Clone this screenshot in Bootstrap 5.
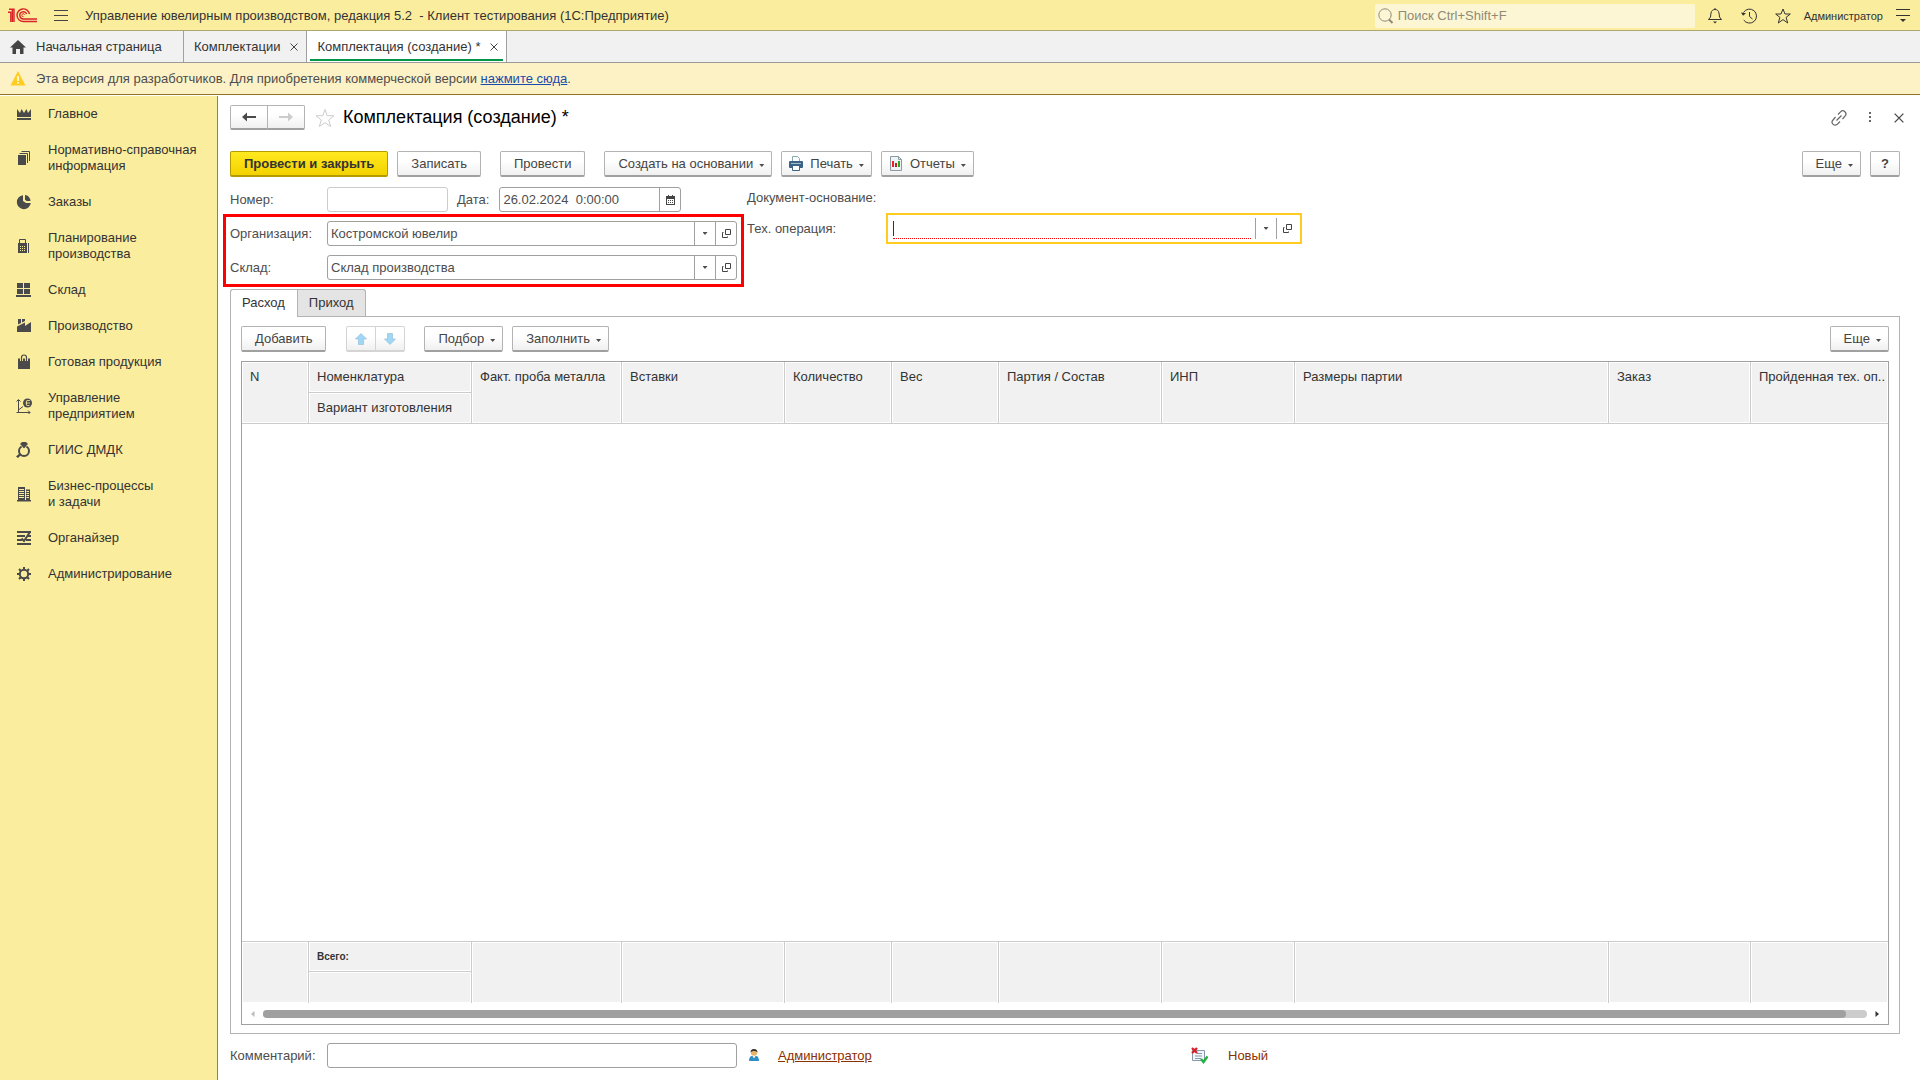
<!DOCTYPE html>
<html lang="ru">
<head>
<meta charset="utf-8">
<meta name="viewport" content="width=device-width, initial-scale=1">
<title>Комплектация (создание)</title>
<link rel="stylesheet" href="https://cdn.jsdelivr.net/npm/bootstrap@5.3.0/dist/css/bootstrap.min.css">
<style>
  body { font-family: "Liberation Sans", Arial, sans-serif; font-size: 13px; line-height: 16px; color: #4d4d4d; background: #fff; }
  svg { display: block; flex: none; }
  .shell { min-height: 100vh; height: 100vh; }
  .fill-y { min-height: 0; }
  .ghost { background: none; border: 0; padding: 0; color: #444; display: flex; align-items: center; justify-content: center; }

  /* title bar */
  .topbar { height: 31px; background: #fbed9e; border-bottom: 1px solid #aea66f; color: #333; padding: 1px 10px 0 8px; gap: 17px; }
  .app-name { white-space: pre; }
  .top-tools { gap: 18px; }
  .search { width: 320px; height: 24px; background: #fdf6d5; border-radius: 2px; padding: 0 3px; margin-right: -6px; }
  .search input { border: 0; background: none; outline: 0; width: 100%; padding: 0; }
  .search input::placeholder { color: #8f8b76; opacity: 1; }
  .user-name { font-size: 11px; color: #333; text-decoration: none; margin: 0 -5px; }

  /* open windows */
  .win-tabs { height: 32px; background: #f1f1f1; border-bottom: 1px solid #9a9a9a; }
  .win-tab { border-right: 1px solid #a0a0a0; padding: 0 8px 0 10px; gap: 10px; }
  .win-tab a { color: #333; text-decoration: none; white-space: nowrap; }
  .win-tab.current { background: #fff; box-shadow: inset 3px 0 #fff, inset -3px 0 #fff, inset 0 -1px #fff, inset 0 -3px #009646; }
  .win-home { width: 184px; padding: 0 0 0 10px; }

  .notice { height: 32px; background: #fdf2c6; border-bottom: 1px solid #8e7526; padding-left: 10px; gap: 10px; }
  .notice a { color: #1a4bac; }

  /* sections */
  .sections { width: 218px; background: #fbed9e; border-right: 1px solid #8d8550; margin-top: 1px; flex: none; }
  .sections a { display: flex; align-items: center; gap: 15px; padding: 10px 0 10px 15px; color: #333; text-decoration: none; }
  .sections svg { fill: #4a4a4a; }

  /* form */
  .doc { padding: 10px 20px 12px 12px; min-width: 0; }
  .doc h1 { font-size: 18px; line-height: 22px; color: #000; margin: 0; font-weight: 400; padding-bottom: 2px; }
  .doc-star { margin: 0 6px 0 8px; }
  .doc-tools { gap: 22px; margin-right: -4px; }
  .commands { margin-top: 21px; gap: 9px; }
  .commands .apart { margin-left: 10px; }
  .tb { height: 26px; padding: 0 13px; border: 1px solid #b3b3b3; border-bottom: 2px solid #a0a0a0; border-radius: 2px; background: linear-gradient(#fff 40%, #f0f0f0); color: #444; display: inline-flex; align-items: center; justify-content: center; white-space: nowrap; }
  .tb.with-caret { padding-right: 7px; gap: 6px; }
  .tb.with-icon { padding-left: 6px; }
  .tb-main { background: linear-gradient(#ffe91f, #f4d200); border-color: #b39b00; color: #333; font-weight: 700; }
  .tb-help { font-weight: 700; padding: 0 10px; }
  .tb.faint { border-color: #d4d4d4; padding: 0; width: 30px; }
  .pair-l { border-radius: 2px 0 0 2px; }
  .pair-r { border-radius: 0 2px 2px 0; margin-left: -1px; }
  .tb.step { width: 38px; height: 25px; padding: 0; }
  .caret-down { width: 5px; height: 3px; background: #4d4d4d; clip-path: polygon(0 0, 100% 0, 50% 100%); flex: none; }
  .tb .caret-down { margin-top: 4px; }
  .lbl { width: 97px; flex: none; }
  .lbl-date { margin: 0 10px 0 9px; }
  .lbl-op { width: 139px; }
  .field { display: flex; height: 25px; border: 1px solid #a0a0a0; border-radius: 3px; background: #fff; overflow: hidden; }
  .field input { flex: 1; min-width: 0; border: 0; outline: 0; padding: 0 3px; color: #4d4d4d; background: none; }
  .field .ghost { width: 21px; border-left: 1px solid #a0a0a0; flex: none; }
  .field.pale { border-color: #ccc; width: 121px; }
  .field.when { width: 182px; }
  .field.wide { width: 410px; }
  .field.active { width: 416px; height: 31px; border: 2px solid #ffcc1f; border-radius: 0; padding: 3px; position: relative; }
  .field.active input { border-bottom: 1px dotted #f00; margin: 0 4px 0 2px; height: 21px; }
  .text-cursor { position: absolute; left: 5px; top: 6px; width: 1px; height: 15px; background: #333; }
  .marked { border: 3px solid #f00; margin: 2px 0 2px -7px; padding: 4px; gap: 9px; }
  .form-body { margin-top: 10px; }
  .form-left { width: 514px; flex: none; }
  .form-right { padding: 3px 0 0 3px; gap: 7px; }

  /* pages */
  .page-tab { height: 27px; border: 1px solid #b3b3b3; border-bottom: 0; background: #e4e4e4; color: #333; padding: 0 11px; border-radius: 0 3px 0 0; }
  .page-tab.on { background: #fff; border-radius: 3px 0 0 0; border-right: 0; margin-bottom: -1px; height: 28px; position: relative; z-index: 1; padding: 0 12px 1px 11px; }
  .page { border: 1px solid #b3b3b3; padding: 9px 10px 8px; }
  .rows-tools { gap: 9px; }
  .rows-tools .arrows { margin: 0 10px 0 11px; }
  .sheet { border: 1px solid #a0a0a0; margin-top: 9px; overflow: hidden; }
  .sheet-scroll { overflow: hidden; }
  .grid-table { table-layout: fixed; width: 100%; min-width: 1646px; height: 100%; border-collapse: separate; border-spacing: 0; color: #333; }
  .grid-table th, .grid-table tfoot td { height: 31px; font-weight: 400; vertical-align: top; padding: 7px 8px 0; background: #f1f1f1; border-right: 1px solid #ccc; border-bottom: 1px solid #ccc; box-shadow: inset 0 0 0 1px #fff; white-space: nowrap; }
  .grid-table tr > .last { border-right: 0; padding-right: 0; }
  .grid-table tfoot tr:first-child td { border-top: 1px solid #ccc; font-size: 10px; font-weight: 700; }
  .grid-table tfoot td.low { border-bottom: 0; }
  .c-n { width: 67px; } .c-md { width: 163px; } .c-probe { width: 150px; } .c-num { width: 107px; }
  .c-inp { width: 133px; } .c-size { width: 314px; } .c-order { width: 142px; }
  .hbar { height: 21px; padding: 0 8px; gap: 8px; }
  .hbar-track { height: 8px; border-radius: 4px; background: #ccc; }
  .hbar-thumb { height: 8px; border-radius: 4px; background: #a0a0a0; }

  .foot { margin-top: 9px; }
  .foot .who { width: 443px; gap: 18px; margin-left: 11px; }
  .foot .state { gap: 20px; }
  .brown { color: #8b3000; }
</style>
<script src="https://cdn.jsdelivr.net/npm/bootstrap@5.3.0/dist/js/bootstrap.bundle.min.js"></script>
</head>
<body>
<svg width="0" height="0" class="position-absolute" aria-hidden="true">
  <symbol id="i-open" viewBox="0 0 9 9"><path d="M3.500.5h5v5h-5zM1.500 3.500H.5v5h5v-1" fill="none" stroke="#444"/></symbol>
  <symbol id="i-x" viewBox="0 0 8 8"><path d="M.5.5l7 7M7.500.5l-7 7" fill="none" stroke="#444"/></symbol>
</svg>
<div class="shell d-flex flex-column">

  <header class="topbar d-flex align-items-center">
    <svg width="29" height="15" viewBox="0 0 29 15" fill="none" stroke="#d8232a" stroke-width="1.400"><path d="M0 4.200h2.800V14M1 1.200h5V14M4.400 1.200V14"/><path d="M21.500 6A6.300 6.300 0 1 0 15.500 13.500H29"/><path d="M18.700 6a3.600 3.600 0 1 0-3.200 5H29"/><path d="M16.700 6.600a1.500 1.500 0 1 0-1.200 2.100" stroke-width="1"/></svg>
    <button class="ghost" aria-label="Меню"><svg width="14" height="12" viewBox="0 0 14 12" stroke="#444"><path d="M0 .5h14M0 5.500h14M0 10.500h14"/></svg></button>
    <span class="app-name">Управление ювелирным производством, редакция 5.2  - Клиент тестирования (1С:Предприятие)</span>
    <div class="top-tools d-flex align-items-center ms-auto">
      <label class="search d-flex align-items-center">
        <svg width="16" height="16" viewBox="0 0 16 16" fill="none" stroke="#8f8b76"><circle cx="7" cy="7" r="6.200"/><path d="M11 11.500l3.500 3.500" stroke-width="2"/></svg>
        <input type="search" class="ms-1" placeholder="Поиск Ctrl+Shift+F" aria-label="Поиск">
      </label>
      <button class="ghost" aria-label="Уведомления"><svg width="16" height="17" viewBox="0 0 16 17" fill="none" stroke="#333"><path d="M8 1v1.500M1.500 12.500h13L12.500 10 12 6C11.500 3.500 10 2.500 8 2.500S4.500 3.500 4 6l-.5 4z"/><path d="M6 14.500h4L8 16.500z" fill="#333" stroke="none"/></svg></button>
      <button class="ghost" aria-label="История"><svg width="16" height="16" viewBox="0 0 16 16" fill="none" stroke="#333"><path d="M2.500 4.500A7 7 0 1 1 2.700 12M8.500 4v4.500l3 2.500"/><path d="M0 4.500l5 .8-3 2.500z" fill="#333" stroke="none"/></svg></button>
      <button class="ghost" aria-label="Избранное"><svg width="16" height="16" viewBox="0 0 16 16" fill="none" stroke="#333"><path d="M8 1l2 5h5.300l-4.200 3.400L12.700 15 8 11.600 3.300 15l1.600-5.600L.7 6H6z"/></svg></button>
      <a href="#" class="user-name">Администратор</a>
      <button class="ghost" aria-label="Сервис"><svg width="14" height="13" viewBox="0 0 14 13"><path d="M0 .5h14M0 6.500h14" stroke="#333"/><path d="M4 10h6l-3 3z" fill="#333"/></svg></button>
    </div>
  </header>

  <nav class="win-tabs d-flex">
    <div class="win-tab win-home d-flex align-items-center"><svg width="16" height="14" viewBox="0 0 16 14" fill="#444"><path d="M8 0L0 7.500h2.500V14H6V9h4v5h3.500V7.500H16z"/></svg><a href="#">Начальная страница</a></div>
    <div class="win-tab d-flex align-items-center"><a href="#">Комплектации</a><button class="ghost" aria-label="Закрыть"><svg width="8" height="8"><use href="#i-x"/></svg></button></div>
    <div class="win-tab current d-flex align-items-center"><a href="#">Комплектация (создание) *</a><button class="ghost" aria-label="Закрыть"><svg width="8" height="8"><use href="#i-x"/></svg></button></div>
  </nav>

  <div class="notice d-flex align-items-center">
    <svg width="16" height="15" viewBox="0 0 16 15"><path d="M8 0l7.500 14.500H.5z" fill="#fc2"/><path d="M7.200 5h1.600v5H7.200zM7.200 11h1.600v1.600H7.200z" fill="#fff"/></svg>
    <span>Эта версия для разработчиков. Для приобретения коммерческой версии <a href="#">нажмите сюда</a>.</span>
  </div>

  <div class="fill-y d-flex flex-grow-1">
    <nav class="sections">
      <a href="#"><svg width="18" height="16" viewBox="0 0 18 16"><path d="M2 3l3 4 1.500-4L9 7l2.500-4L13 7l3-4v8H2zM2 12h14v2H2z"/></svg>Главное</a>
      <a href="#"><svg width="18" height="16" viewBox="0 0 18 16"><path d="M3 5h8v10H3z"/><path d="M4.500 3.500h8V13M6.500 1.500h8V11" fill="none" stroke="#4a4a4a"/></svg><span>Нормативно-справочная<br>информация</span></a>
      <a href="#"><svg width="18" height="16" viewBox="0 0 18 16"><path d="M8 1.200A7 7 0 1 0 15.800 9H11L8 7z"/><path d="M10 1a6 6 0 0 1 5.500 6H11.500L10 5.500z"/></svg>Заказы</a>
      <a href="#"><svg width="18" height="16" viewBox="0 0 18 16"><path d="M4.500 5V1.500h6V5" fill="none" stroke="#4a4a4a"/><path d="M3 5h9v10H3z"/><path d="M5 8.500h6M5 10.500h6M5 12.500h6" stroke="#fbed9e" stroke-dasharray="1 1"/><path d="M13.500 5v10" stroke="#4a4a4a"/></svg><span>Планирование<br>производства</span></a>
      <a href="#"><svg width="18" height="16" viewBox="0 0 18 16"><path d="M2 1h6v5H2zM9 1h6v5H9zM2 7h6v5H2zM9 7h6v5H9zM1 13h15v2H1z"/></svg>Склад</a>
      <a href="#"><svg width="18" height="16" viewBox="0 0 18 16"><path d="M3 1h3v4L3 6.500zM7 1h3v2L7 4.500zM2 14V8.500l8-4V8l6-4v10z"/></svg>Производство</a>
      <a href="#"><svg width="18" height="16" viewBox="0 0 18 16"><path d="M3 4.500h12V15H3z"/><path d="M6.500 7V3.500a2.500 2.500 0 0 1 5 0V7" fill="none" stroke="#fbed9e" stroke-width="3"/><path d="M6.500 7V3.500a2.500 2.500 0 0 1 5 0V7" fill="none" stroke="#4a4a4a" stroke-width="1.200"/></svg>Готовая продукция</a>
      <a href="#"><svg width="18" height="16" viewBox="0 0 18 16"><path d="M3.500 2v12.500M1.500 14.500H15M3.500 12L8 8.500M1.500 3.500l2-2 2 2M13 12.500l2 2-2 2" fill="none" stroke="#4a4a4a"/><circle cx="12.500" cy="5" r="4.500"/><path d="M12 2.500h3M10.500 5H15M12 7.500h2.500M11.500 2.500v5" stroke="#fbed9e" stroke-width=".8"/></svg><span>Управление<br>предприятием</span></a>
      <a href="#"><svg width="18" height="16" viewBox="0 0 18 16"><circle cx="9" cy="9" r="5" fill="none" stroke="#4a4a4a" stroke-width="2"/><path d="M6 3h6l-3 4z" stroke="#fbed9e"/><path d="M7 0h4l2 2-4 4-4-4zM1 14.500l4-3.500 1.500 1.500L3 16z"/></svg>ГИИС ДМДК</a>
      <a href="#"><svg width="18" height="16" viewBox="0 0 18 16"><path d="M2 14h14v1.500H2zM3 1h7v14H3zM11 3.500h4V15h-4z"/><path d="M4 3.500h5M4 5.500h5M4 7.500h5M4 9.500h5M4 11.500h5M11.500 5.500h2.500M11.500 7.500h2.500M11.500 9.500h2.500M11.500 11.500h2.500" stroke="#fbed9e"/></svg><span>Бизнес-процессы<br>и задачи</span></a>
      <a href="#"><svg width="18" height="16" viewBox="0 0 18 16"><path d="M2 1h14v2H2zM2 5h8v2H2zM13 5h3v2h-3zM2 9h5v2H2zM11 9h5v2h-5zM2 13h14v2H2z"/><path d="M15 2l-6 9-2.500-2.500" fill="none" stroke="#4a4a4a" stroke-width="2"/></svg>Органайзер</a>
      <a href="#"><svg width="18" height="16" viewBox="0 0 18 16"><circle cx="9" cy="8" r="4.200" fill="none" stroke="#4a4a4a" stroke-width="2"/><path d="M9 1v3M9 12v3M2 8h3M13 8h3M4 3l2 2M12 11l2 2M4 13l2-2M12 5l2-2" stroke="#4a4a4a" stroke-width="2"/></svg>Администрирование</a>
    </nav>

    <main class="doc d-flex flex-column flex-grow-1">
      <div class="d-flex align-items-center">
        <button class="tb step pair-l" aria-label="Назад"><svg width="14" height="10" viewBox="0 0 14 10"><path d="M0 5l5-4.500V4h9v2H5v3.500z" fill="#4a4a4a"/></svg></button>
        <button class="tb step pair-r" aria-label="Вперед"><svg width="14" height="10" viewBox="0 0 14 10"><path d="M14 5L9 .5V4H0v2h9v3.500z" fill="#ccc"/></svg></button>
        <svg class="doc-star" width="24" height="20" viewBox="0 0 24 20" fill="none" stroke="#ccc"><path d="M12 1.500l2.200 6.200h6.800l-5.300 4.300 2 6.500L12 14.700l-5.700 3.800 2-6.500L3 7.700h6.800z"/></svg>
        <h1>Комплектация (создание) *</h1>
        <div class="doc-tools ms-auto d-flex align-items-center">
          <button class="ghost" aria-label="Ссылка"><svg width="16" height="16" viewBox="0 0 16 16" fill="none" stroke="#666" stroke-width="1.200"><path d="M7 4.500l2.500-2.700a3 3 0 0 1 4.500 4.300L11.500 9M9 11.500l-2.500 2.700A3 3 0 0 1 2 10l2.500-3M5.500 10.500l5-5"/></svg></button>
          <button class="ghost" aria-label="Ещё"><svg width="3" height="11" fill="#666"><path d="M0 0h2v2H0zM0 4h2v2H0zM0 8h2v2H0z"/></svg></button>
          <button class="ghost" aria-label="Закрыть"><svg width="10" height="10" viewBox="0 0 8 8"><use href="#i-x"/></svg></button>
        </div>
      </div>

      <div class="commands d-flex">
        <button class="tb tb-main">Провести и закрыть</button>
        <button class="tb">Записать</button>
        <button class="tb apart">Провести</button>
        <button class="tb with-caret apart">Создать на основании <i class="caret-down"></i></button>
        <button class="tb with-caret with-icon"><svg width="16" height="15" viewBox="0 0 16 15"><path d="M4.500 6V.5h5l2 2V6" fill="#fff" stroke="#8aa"/><rect x="1" y="5" width="14" height="7" rx="1" fill="#3c6384"/><path d="M4.500 9.500h7v5h-7z" fill="#fff" stroke="#3c6384"/><path d="M3 7.500h10" stroke="#9fc0d8"/></svg>Печать <i class="caret-down"></i></button>
        <button class="tb with-caret with-icon"><svg width="16" height="15" viewBox="0 0 16 15"><path d="M2.500.5h8l3 3v11h-11z" fill="#eef3f6" stroke="#8a9aa5"/><path d="M10.500.5v3h3" fill="none" stroke="#8a9aa5"/><path d="M4 5h2v6H4z" fill="#e22"/><path d="M7 7h2v4H7z" fill="#b22"/><path d="M10 5h2v6h-2z" fill="#2a2"/></svg>Отчеты <i class="caret-down"></i></button>
        <button class="tb with-caret ms-auto">Еще <i class="caret-down"></i></button>
        <button class="tb tb-help">?</button>
      </div>

      <div class="form-body d-flex">
        <div class="form-left">
          <div class="d-flex align-items-center">
            <label class="lbl" for="num">Номер:</label>
            <div class="field pale"><input id="num" type="text"></div>
            <label class="lbl-date" for="date">Дата:</label>
            <div class="field when"><input id="date" type="text" value="26.02.2024  0:00:00"><button class="ghost" aria-label="Календарь"><svg width="9" height="10" viewBox="0 0 9 10"><path d="M0 1h9v9H0z" fill="#444"/><path d="M1 4h7v5H1z" fill="#fff"/><path d="M2 5.500h5M2 7.500h5" stroke="#444" stroke-dasharray="1 1"/><path d="M2 0h1v2H2zM6 0h1v2H6z" fill="#444"/></svg></button></div>
          </div>
          <div class="marked d-flex flex-column">
            <div class="d-flex align-items-center">
              <label class="lbl" for="org">Организация:</label>
              <div class="field wide"><input id="org" type="text" value="Костромской ювелир"><button class="ghost" aria-label="Выбрать"><i class="caret-down"></i></button><button class="ghost" aria-label="Открыть"><svg width="9" height="9"><use href="#i-open"/></svg></button></div>
            </div>
            <div class="d-flex align-items-center">
              <label class="lbl" for="store">Склад:</label>
              <div class="field wide"><input id="store" type="text" value="Склад производства"><button class="ghost" aria-label="Выбрать"><i class="caret-down"></i></button><button class="ghost" aria-label="Открыть"><svg width="9" height="9"><use href="#i-open"/></svg></button></div>
            </div>
          </div>
        </div>
        <div class="form-right d-flex flex-column">
          <div>Документ-основание:</div>
          <div class="d-flex align-items-center">
            <label class="lbl-op" for="op">Тех. операция:</label>
            <div class="field active"><input id="op" type="text"><span class="text-cursor"></span><button class="ghost" aria-label="Выбрать"><i class="caret-down"></i></button><button class="ghost" aria-label="Открыть"><svg width="9" height="9"><use href="#i-open"/></svg></button></div>
          </div>
        </div>
      </div>

      <div class="d-flex align-items-end">
        <button class="page-tab on">Расход</button>
        <button class="page-tab">Приход</button>
      </div>
      <section class="page fill-y d-flex flex-column flex-grow-1">
        <div class="rows-tools d-flex">
          <button class="tb">Добавить</button>
          <div class="arrows d-flex">
            <button class="tb faint pair-l" aria-label="Вверх"><svg width="12" height="12" viewBox="0 0 12 12"><path d="M6 .5l5.500 5.500H8.500v5.500h-5V6H.5z" fill="#9fd8f7" stroke="#8fb8d0" stroke-width=".6"/></svg></button>
            <button class="tb faint pair-r" aria-label="Вниз"><svg width="12" height="12" viewBox="0 0 12 12"><path d="M6 11.500l5.500-5.500H8.500V.5h-5V6H.5z" fill="#9fd8f7" stroke="#8fb8d0" stroke-width=".6"/></svg></button>
          </div>
          <button class="tb with-caret">Подбор <i class="caret-down"></i></button>
          <button class="tb with-caret">Заполнить <i class="caret-down"></i></button>
          <button class="tb with-caret ms-auto">Еще <i class="caret-down"></i></button>
        </div>
        <div class="sheet fill-y d-flex flex-column flex-grow-1">
          <div class="sheet-scroll fill-y flex-grow-1">
            <table class="grid-table">
              <colgroup><col class="c-n"><col class="c-md"><col class="c-probe"><col class="c-md"><col class="c-num"><col class="c-num"><col class="c-md"><col class="c-inp"><col class="c-size"><col class="c-order"><col></colgroup>
              <thead>
                <tr><th rowspan="2">N</th><th>Номенклатура</th><th rowspan="2">Факт. проба металла</th><th rowspan="2">Вставки</th><th rowspan="2">Количество</th><th rowspan="2">Вес</th><th rowspan="2">Партия / Состав</th><th rowspan="2">ИНП</th><th rowspan="2">Размеры партии</th><th rowspan="2">Заказ</th><th rowspan="2" class="last">Пройденная тех. оп..</th></tr>
                <tr><th>Вариант изготовления</th></tr>
              </thead>
              <tbody><tr><td colspan="11"></td></tr></tbody>
              <tfoot>
                <tr><td rowspan="2" class="low"></td><td>Всего:</td><td rowspan="2" class="low"></td><td rowspan="2" class="low"></td><td rowspan="2" class="low"></td><td rowspan="2" class="low"></td><td rowspan="2" class="low"></td><td rowspan="2" class="low"></td><td rowspan="2" class="low"></td><td rowspan="2" class="low"></td><td rowspan="2" class="low last"></td></tr>
                <tr><td class="low"></td></tr>
              </tfoot>
            </table>
          </div>
          <div class="hbar d-flex align-items-center">
            <svg width="5" height="8" viewBox="0 0 5 8"><path d="M4.500 1v6L1 4z" fill="#bbb"/></svg>
            <div class="hbar-track flex-grow-1"><div class="hbar-thumb" style="width:98.7%"></div></div>
            <svg width="5" height="8" viewBox="0 0 5 8"><path d="M.5 1v6L4 4z" fill="#333"/></svg>
          </div>
        </div>
      </section>

      <div class="foot d-flex align-items-center">
        <label class="lbl" for="note">Комментарий:</label>
        <div class="field wide"><input id="note" type="text"></div>
        <div class="who d-flex align-items-center">
          <svg width="12" height="16" viewBox="0 0 12 16"><circle cx="6" cy="4.500" r="3.200" fill="#e8b36a"/><path d="M2.500 4.500a3.500 3.500 0 0 1 7 0C8 2.500 4 2.500 2.500 4.500z" fill="#333"/><path d="M1 13c0-3 1-5 3-5h4c2 0 3 2 3 5z" fill="#2f8ec6"/><path d="M4.500 8L6 10.500 7.500 8z" fill="#fff"/></svg>
          <a href="#" class="brown">Администратор</a>
        </div>
        <div class="state d-flex align-items-center">
          <svg width="17" height="18" viewBox="0 0 17 18"><path d="M1.500 3.500h12v10h-12z" fill="#f2f6fa" stroke="#8797ab"/><path d="M6 6.500h5M4 9h7M4 11.500h6" stroke="#8797ab"/><path d="M1 1l5 5M6 1L1 6" stroke="#d8202a" stroke-width="2.400"/><path d="M10 12l2.500 3L16.500 9.500" fill="none" stroke="#20b040" stroke-width="2.400"/></svg>
          <a href="#" class="brown text-decoration-none">Новый</a>
        </div>
      </div>
    </main>
  </div>
</div>
</body>
</html>
